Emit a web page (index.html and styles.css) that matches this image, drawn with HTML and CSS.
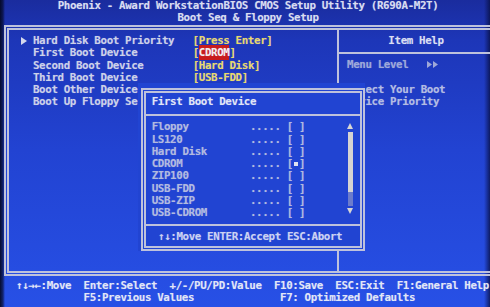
FILE: index.html
```html
<!DOCTYPE html>
<html>
<head>
<meta charset="utf-8">
<link rel="stylesheet" href="styles.css">
</head>
<body>
<div class="screen">
  <header class="hdr">
    <div class="hline">Phoenix - Award WorkstationBIOS CMOS Setup Utility (R690A-M2T)</div>
    <div class="hline">Boot Seq &amp; Floppy Setup</div>
  </header>

  <main class="frame">
    <section class="items">
      <div class="row"><span class="ptr"><svg width="6" height="8" viewBox="0 0 6 8"><path d="M0 0 L6 4 L0 8 Z" fill="#d4d8ec"/></svg></span> Hard Disk Boot Priority   <span class="val">[Press Enter]</span></div>
      <div class="row">  First Boot Device         <span class="val">[<span class="sel">CDROM</span>]</span></div>
      <div class="row">  Second Boot Device        <span class="val">[Hard Disk]</span></div>
      <div class="row">  Third Boot Device         <span class="val">[USB-FDD]</span></div>
      <div class="row">  Boot Other Device</div>
      <div class="row">  Boot Up Floppy Se</div>
    </section>

    <aside class="help">
      <div class="help-title">Item Help</div>
      <div class="help-body">
        <div class="row lvl">Menu Level   <span class="dbl"><svg width="11" height="7" viewBox="0 0 11 7"><path d="M0 0 L5 3.5 L0 7 Z M6 0 L11 3.5 L6 7 Z" fill="#9ea8d8"/></svg></span></div>
        <div class="row"> </div>
        <div class="row">Select Your Boot</div>
        <div class="row">Device Priority</div>
      </div>
    </aside>

    <div class="popup">
      <div class="pop-box">
        <div class="pop-title">First Boot Device</div>
        <div class="pop-list">
          <div class="opts">
            <div class="row">Floppy          ..... [ ]</div>
            <div class="row">LS120           ..... [ ]</div>
            <div class="row">Hard Disk       ..... [ ]</div>
            <div class="row">CDROM           ..... [<span class="mark"></span>]</div>
            <div class="row">ZIP100          ..... [ ]</div>
            <div class="row">USB-FDD         ..... [ ]</div>
            <div class="row">USB-ZIP         ..... [ ]</div>
            <div class="row">USB-CDROM       ..... [ ]</div>
          </div>
          <div class="scroll">
            <svg class="arr" width="6" height="6" viewBox="0 0 6 6"><path d="M3 0 L6 6 L0 6 Z" fill="#d8d6d4"/></svg>
            <div class="track"><div class="thumb"></div><div class="rest"></div></div>
            <svg class="arr" width="6" height="6" viewBox="0 0 6 6"><path d="M0 0 L6 0 L3 6 Z" fill="#d8d6d4"/></svg>
          </div>
        </div>
        <div class="pop-foot">↑↓:Move ENTER:Accept ESC:Abort</div>
      </div>
    </div>
  </main>

  <footer class="keys">
    <div class="row">↑↓→←:Move  Enter:Select  +/-/PU/PD:Value  F10:Save  ESC:Exit  F1:General Help</div>
    <div class="row">           F5:Previous Values              F7: Optimized Defaults</div>
  </footer>
</div>
</body>
</html>
```

FILE: styles.css
```css
html, body {
  margin: 0;
  padding: 0;
  overflow: hidden;
  background: #1f3dc8;
}

.screen {
  width: 490px;
  height: 307px;
  overflow: hidden;
  position: relative;
  font-family: "DejaVu Sans Mono", "Liberation Mono", monospace;
  font-weight: bold;
  font-size: 10.8px;
  letter-spacing: -0.36px;
  line-height: 12.3px;
  color: #cdd1e8;
  text-shadow: 0 0 1px rgba(220, 225, 255, 0.35);
  background:
    linear-gradient(to right, rgba(4, 8, 36, 0.95) 0, rgba(4, 8, 36, 0.6) 3px, rgba(4, 8, 36, 0) 5px, rgba(0, 0, 0, 0) 484px, rgba(8, 16, 70, 0.8) 490px),
    linear-gradient(to bottom, #1a2c9e 0, #1d36b8 40px, #2243d2 150px, #2750e6 307px);
}

.row {
  white-space: pre;
  height: 12.3px;
}

/* header */
.hdr {
  padding-left: 6px;
  text-align: center;
  color: #d8dcf0;
}
.hline {
  white-space: pre;
  height: 12.3px;
}

/* main frame */
.frame {
  position: relative;
  margin: 0.4px -8px 0 4px;
  height: 241px;
  border: 5px double #bec2dc;
  display: grid;
  grid-template-columns: 328px 1fr;
}

.items {
  padding: 5px 0 0 11.7px;
}
.ptr {
  display: inline-block;
  width: 6.14px;
}
.ptr svg {
  vertical-align: -1px;
}
.val {
  color: #e8d86a;
}
.sel {
  background: #c81c1c;
  color: #f2eef0;
  padding: 1px 0;
}

.help {
  border-left: 2px solid #bec2dc;
}
.help-title {
  text-align: center;
  color: #dadef2;
  padding: 5px 0 5px 0;
  height: 12.3px;
  border-bottom: 2px solid #bec2dc;
}
.help-body {
  padding: 5px 0 0 8px;
  color: #b4bce2;
}
.lvl {
  color: #9ea8d8;
}
.dbl {
  display: inline-block;
}
.dbl svg {
  vertical-align: 0px;
}

/* popup overlay: the outer box clears the text cells around the drawn border */
.popup {
  position: absolute;
  left: 129px;
  top: 53px;
  padding: 5px 0 0 3px;
  background: #2144d2;
}
.pop-box {
  width: 214px;
  height: 153px;
  border: 5px double #bec2dc;
  display: flex;
  flex-direction: column;
}
.pop-title {
  white-space: pre;
  color: #e2e6f6;
  padding: 3px 0 6px 5.7px;
  height: 12.3px;
  border-bottom: 2px solid #bec2dc;
}
.pop-list {
  display: grid;
  grid-template-columns: 201px 6px 1fr;
  padding-top: 5px;
  height: 103px;
  border-bottom: 2px solid #bec2dc;
}
.opts {
  padding-left: 5.7px;
  color: #b2badf;
}
.mark {
  display: inline-block;
  width: 4px;
  height: 4px;
  margin: 0 1px;
  background: #e0e2f0;
  vertical-align: 1px;
}
.scroll {
  display: flex;
  flex-direction: column;
  align-items: center;
  padding-top: 2px;
}
.arr {
  display: block;
}
.track {
  width: 5px;
  margin: 3px 0 2px;
  display: flex;
  flex-direction: column;
}
.thumb {
  height: 60px;
  background: #d6d4d2;
}
.rest {
  height: 14px;
  background: #6c7ccc;
}
.pop-foot {
  white-space: pre;
  color: #ccd2f2;
  padding: 5px 0 0 12px;
  height: 12.3px;
}

/* bottom key legend */
.keys {
  padding: 4px 0 0 16px;
  color: #e2e6f6;
}
```
